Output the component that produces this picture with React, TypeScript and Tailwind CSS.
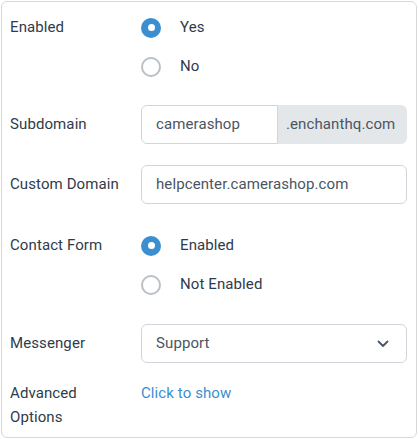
import React, { useState } from 'react'

function Radio({ checked, label, onClick }: { checked: boolean; label: string; onClick: () => void }) {
  return (
    <label className="flex h-[39px] cursor-pointer items-center" onClick={onClick}>
      {checked ? (
        <span className="flex h-5 w-5 items-center justify-center rounded-full bg-[#3b8fd0]">
          <span className="h-[7px] w-[7px] rounded-full bg-white" />
        </span>
      ) : (
        <span className="h-5 w-5 rounded-full border-2 border-[#b9c0c7] bg-white" />
      )}
      <span className="ml-[19px] text-[#2f3b4a]">{label}</span>
    </label>
  )
}

function Row({ label, children, top, className }: { label: string; children: React.ReactNode; top?: boolean; className?: string }) {
  return (
    <div className={'grid grid-cols-[112px_1fr] gap-x-[19px] ' + (className ?? '')}>
      <div className={top ? 'leading-6 text-[#2f3b4a]' : 'flex h-[39px] items-center text-[#2f3b4a]'}>{label}</div>
      <div>{children}</div>
    </div>
  )
}

export default function App() {
  const [enabled, setEnabled] = useState('yes')
  const [contact, setContact] = useState('enabled')

  return (
    <div className="p-px" style={{ fontFamily: 'Roboto, "Noto Sans", sans-serif' }}>
      <div className="flex h-[437px] w-[416px] flex-col gap-[21px] rounded-md border border-[#d6d9dc] bg-white pb-2 pl-[8px] pr-[9px] pt-[6px] text-[15px] tracking-[0.1px]">
        <Row label="Enabled">
          <Radio checked={enabled === 'yes'} label="Yes" onClick={() => setEnabled('yes')} />
          <Radio checked={enabled === 'no'} label="No" onClick={() => setEnabled('no')} />
        </Row>

        <Row label="Subdomain" className="-mt-[2px]">
          <div className="flex h-[39px]">
            <div className="flex w-[137px] items-center rounded-l-md border border-[#d1d5db] pl-[14px] text-[#4a5563]">
              camerashop
            </div>
            <div className="flex flex-1 items-center rounded-r-md bg-[#e4e7ea] pl-[8px] text-[#4a5563]">
              .enchanthq.com
            </div>
          </div>
        </Row>

        <Row label="Custom Domain">
          <div className="flex h-[39px] items-center rounded-md border border-[#d1d5db] pl-[14px] text-[#4a5563]">
            helpcenter.camerashop.com
          </div>
        </Row>

        <Row label="Contact Form" className="mt-px">
          <Radio checked={contact === 'enabled'} label="Enabled" onClick={() => setContact('enabled')} />
          <Radio checked={contact === 'not'} label="Not Enabled" onClick={() => setContact('not')} />
        </Row>

        <Row label="Messenger" className="-mt-px">
          <div className="flex h-[39px] items-center justify-between rounded-md border border-[#d1d5db] pl-[14px] pr-[17px] text-[#4a5563]">
            <span>Support</span>
            <svg width="12" height="8" viewBox="0 0 12 8" fill="none">
              <path d="M1.5 1.5L6 6L10.5 1.5" stroke="#4a5563" strokeWidth="1.8" strokeLinecap="round" strokeLinejoin="round" />
            </svg>
          </div>
        </Row>

        <div className="-mt-[3px]">
          <Row label="Advanced Options" top>
            <a className="cursor-pointer leading-6 text-[#3b8fd0]">Click to show</a>
          </Row>
        </div>
      </div>
    </div>
  )
}
